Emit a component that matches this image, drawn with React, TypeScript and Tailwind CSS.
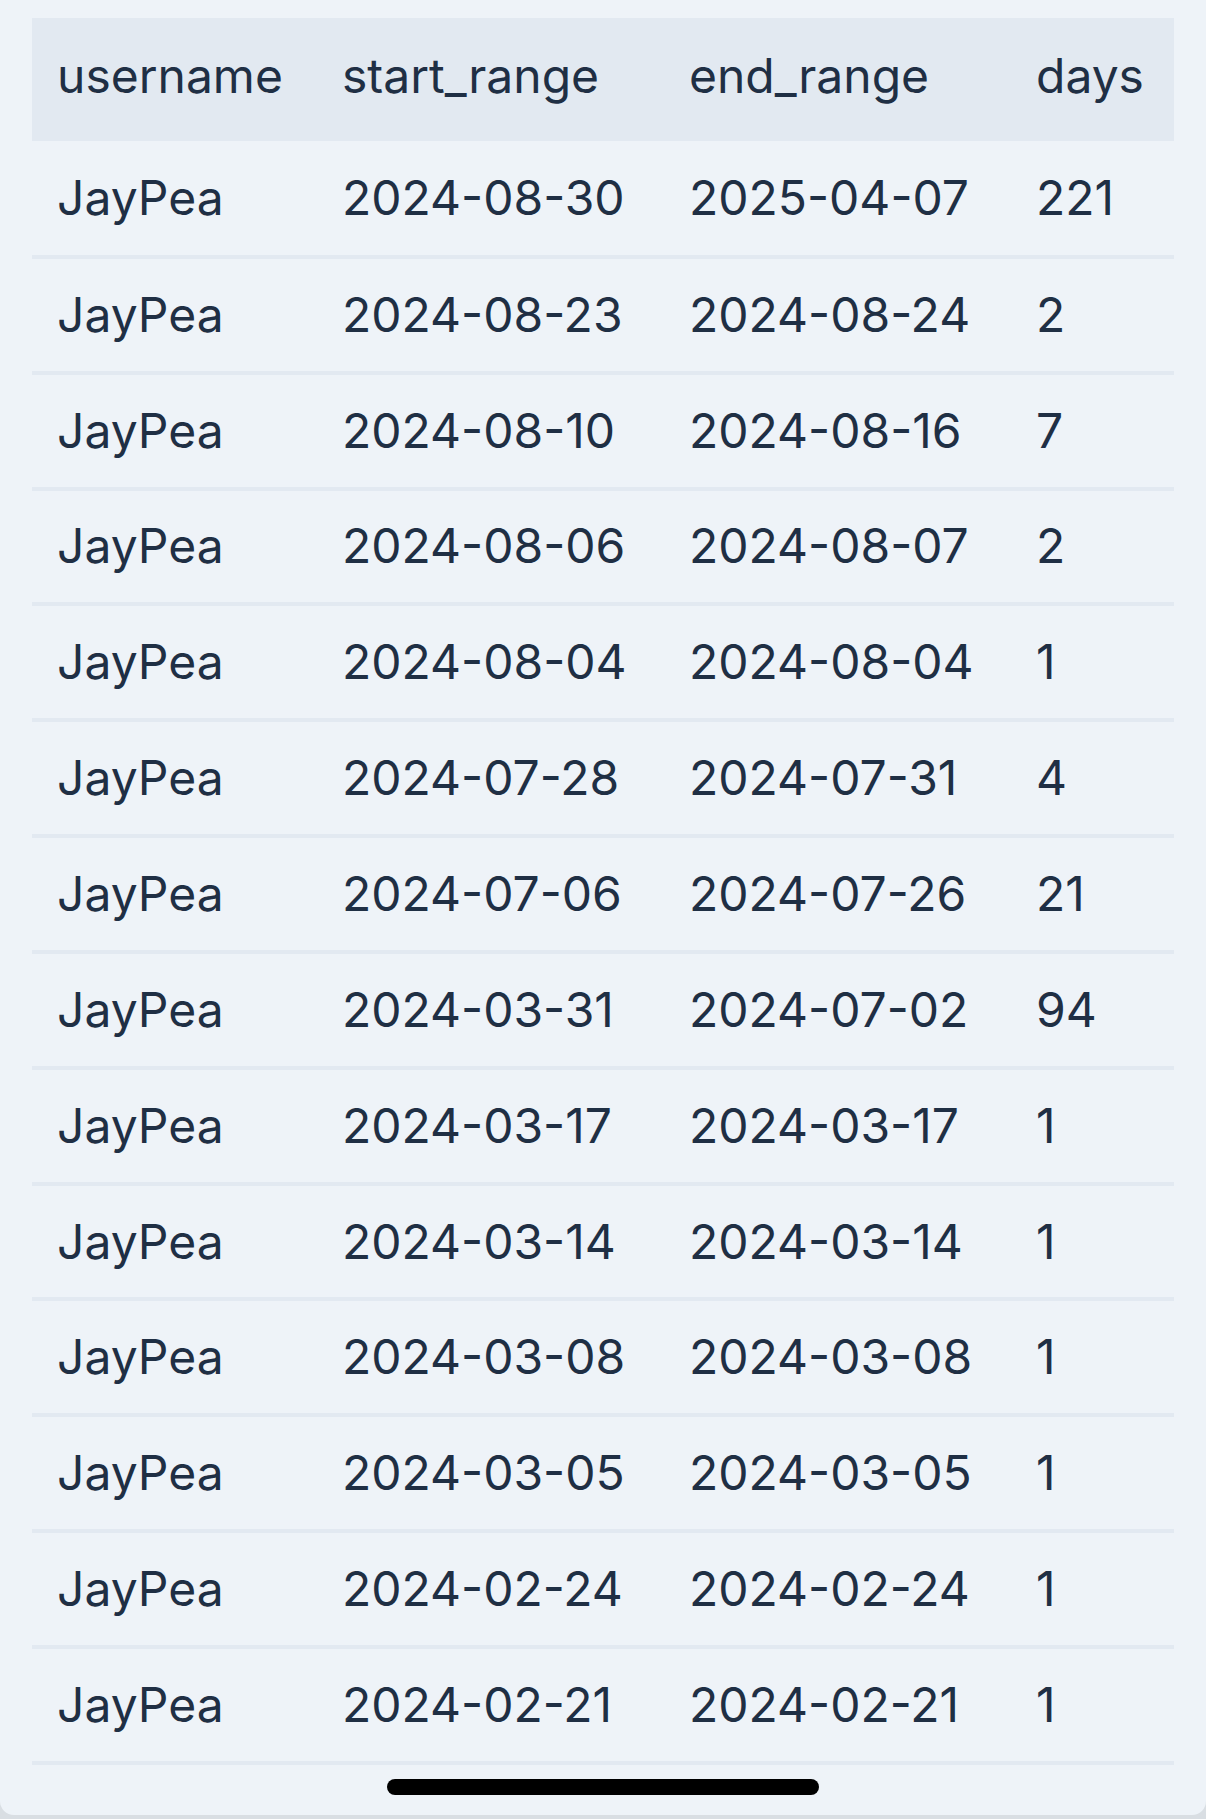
import React from "react";

const rows: [string, string, string, string][] = [
  ["JayPea", "2024-08-30", "2025-04-07", "221"],
  ["JayPea", "2024-08-23", "2024-08-24", "2"],
  ["JayPea", "2024-08-10", "2024-08-16", "7"],
  ["JayPea", "2024-08-06", "2024-08-07", "2"],
  ["JayPea", "2024-08-04", "2024-08-04", "1"],
  ["JayPea", "2024-07-28", "2024-07-31", "4"],
  ["JayPea", "2024-07-06", "2024-07-26", "21"],
  ["JayPea", "2024-03-31", "2024-07-02", "94"],
  ["JayPea", "2024-03-17", "2024-03-17", "1"],
  ["JayPea", "2024-03-14", "2024-03-14", "1"],
  ["JayPea", "2024-03-08", "2024-03-08", "1"],
  ["JayPea", "2024-03-05", "2024-03-05", "1"],
  ["JayPea", "2024-02-24", "2024-02-24", "1"],
  ["JayPea", "2024-02-21", "2024-02-21", "1"],
];

export default function App() {
  return (
    <div className="w-[1206px] h-[1819px] bg-[#d9dee3]">
      <div
        className="w-[1206px] h-[1815px] bg-[#eef3f8] rounded-b-[14px] pt-[18px] px-[32px] flex flex-col text-[#1f2f44]"
        style={{ fontFamily: "Inter, 'Noto Sans', sans-serif" }}
      >
        <table className="w-[1142px] table-fixed border-collapse text-[48px] leading-none">
          <colgroup>
            <col className="w-[285px]" />
            <col className="w-[347px]" />
            <col className="w-[347px]" />
            <col className="w-[163px]" />
          </colgroup>
          <thead>
            <tr className="bg-[#e2e9f1] h-[123px]">
              <th className="text-left font-normal pl-[25px] pb-[7px] whitespace-nowrap">username</th>
              <th className="text-left font-normal pl-[25px] pb-[7px] whitespace-nowrap">start_range</th>
              <th className="text-left font-normal pl-[25px] pb-[7px] whitespace-nowrap">end_range</th>
              <th className="text-left font-normal pl-[25px] pb-[7px] whitespace-nowrap">days</th>
            </tr>
          </thead>
          <tbody>
            {rows.map((r, i) => (
              <tr key={i} className="h-[115.85px] border-b-4 border-[#e2e9f1]">
                {r.map((c, j) => (
                  <td key={j} className="pl-[25px] whitespace-nowrap">
                    {c}
                  </td>
                ))}
              </tr>
            ))}
          </tbody>
        </table>
        <div className="flex justify-center mt-[14px]">
          <div className="w-[432px] h-[16px] rounded-full bg-black" />
        </div>
      </div>
    </div>
  );
}
